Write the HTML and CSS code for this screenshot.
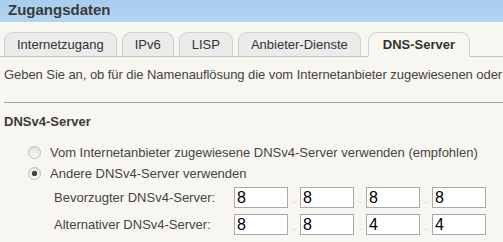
FILE: index.html
```html
<!DOCTYPE html>
<html lang="de">
<head>
  <meta charset="UTF-8" />
  <title>Zugangsdaten</title>
  <link rel="stylesheet" href="styles.css">
</head>
<body>
  <div class="header">Zugangsdaten</div>

  <div class="tabs">
    <div class="tab">Internetzugang</div>
    <div class="tab">IPv6</div>
    <div class="tab">LISP</div>
    <div class="tab">Anbieter-Dienste</div>
    <div class="tab active">DNS-Server</div>
  </div>

  <div class="content">
    <p class="intro">Geben Sie an, ob für die Namenauflösung die vom Internetanbieter zugewiesenen oder</p>
    <hr class="sep" />

    <h3>DNSv4-Server</h3>

    <div class="radios">
      <label class="radio">
        <input type="radio" name="dns4" />
        <span>Vom Internetanbieter zugewiesene DNSv4-Server verwenden (empfohlen)</span>
      </label>
      <label class="radio">
        <input type="radio" name="dns4" checked />
        <span>Andere DNSv4-Server verwenden</span>
      </label>
    </div>

    <div class="ip-rows">
      <div class="ip-row">
        <span class="ip-label">Bevorzugter DNSv4-Server:</span>
        <input class="octet" type="text" value="8" /><span class="dot">.</span>
        <input class="octet" type="text" value="8" /><span class="dot">.</span>
        <input class="octet" type="text" value="8" /><span class="dot">.</span>
        <input class="octet" type="text" value="8" />
      </div>
      <div class="ip-row">
        <span class="ip-label">Alternativer DNSv4-Server:</span>
        <input class="octet" type="text" value="8" /><span class="dot">.</span>
        <input class="octet" type="text" value="8" /><span class="dot">.</span>
        <input class="octet" type="text" value="4" /><span class="dot">.</span>
        <input class="octet" type="text" value="4" />
      </div>
    </div>
  </div>
</body>
</html>
```

FILE: styles.css
```css
* { box-sizing: border-box; }
body {
  margin: 0;
  background: #f8f6f1;
  font-family: "Liberation Sans", Arial, sans-serif;
  font-size: 13px;
  color: #444;
  overflow: hidden;
}
.header {
  height: 22px;
  padding-left: 8px;
  background: linear-gradient(to bottom, #a9cdee, #b3d4f1);
  color: #3a3a3a;
  font-size: 15px;
  font-weight: bold;
  line-height: 20px;
}
.tabs {
  display: flex;
  gap: 5px;
  padding: 10px 0 0 4px;
  border-bottom: 1px solid #c4c4c4;
}
.tab {
  height: 25px;
  padding: 0 12px;
  margin-bottom: -1px;
  border: 1px solid #cfcfcf;
  border-bottom-color: #c4c4c4;
  border-radius: 9px 9px 0 0;
  background: #ebebeb;
  color: #333;
  line-height: 23px;
  white-space: nowrap;
}
.tab.active {
  margin-left: 2px;
  padding: 0 14px;
  background: #f8f6f1;
  border-bottom-color: #f8f6f1;
  font-weight: bold;
}
.content {
  padding-left: 4px;
}
.intro {
  margin: 9px 0 0;
  white-space: nowrap;
  line-height: 18px;
  letter-spacing: -0.06px;
}
.sep {
  margin: 18px 0 0;
  border: 0;
  border-top: 1px solid #9ea2a2;
}
h3 {
  margin: 11px 0 0;
  font-size: 13px;
  color: #3a3a3a;
}
.radios {
  margin: 13px 0 0 24px;
}
.radio {
  display: flex;
  align-items: center;
  height: 21px;
}
.radio input {
  appearance: none;
  margin: 0 9px 0 0;
  width: 13px;
  height: 13px;
  border: 1px solid #bdbdbd;
  border-radius: 50%;
  background: linear-gradient(to bottom, #e2e2e2, #f7f7f7);
}
.radio input:checked {
  background: radial-gradient(circle, #444 0 2.5px, transparent 3px),
              linear-gradient(to bottom, #e2e2e2, #f7f7f7);
}
.ip-rows {
  padding-left: 50px;
}
.ip-row {
  display: flex;
  align-items: center;
  height: 27px;
}
.ip-label {
  width: 180px;
}
.octet {
  width: 54px;
  height: 21px;
  padding: 0 2px;
  border: 1px solid #a9a9a9;
  background: #fff;
  font-family: "Liberation Sans", Arial, sans-serif;
  font-size: 16px;
  color: #000;
}
.dot {
  width: 12px;
  text-align: center;
  font-size: 8px;
  color: #888;
  padding-top: 6px;
}
```
